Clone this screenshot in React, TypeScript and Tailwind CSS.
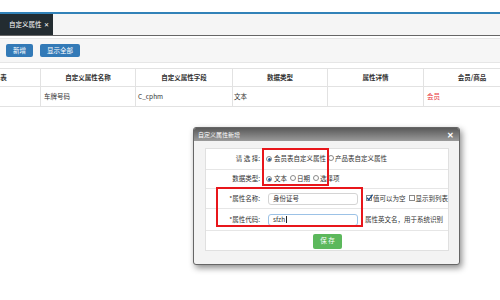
const font = "font-['Noto_Sans_CJK_SC','Noto_Sans',sans-serif]";

const columns = ["所属表", "自定义属性名称", "自定义属性字段", "数据类型", "属性详情", "会员/商品"];

function Radio({ checked }: { checked?: boolean }) {
  return (
    <span className="inline-flex h-[6px] w-[6px] items-center justify-center rounded-full border border-[#8a8a8a] bg-white">
      {checked && <span className="h-[3px] w-[3px] rounded-full bg-[#1f5f9a]" />}
    </span>
  );
}

function Check({ checked }: { checked?: boolean }) {
  return (
    <span className="relative inline-block h-[6px] w-[6px] border border-[#8a8a8a] bg-white">
      {checked && (
        <svg viewBox="0 0 6 6" className="absolute -left-px -top-[2px] h-[7px] w-[7px]">
          <path d="M1 3.2 L2.4 5 L5.6 0.6" stroke="#1a4f8a" strokeWidth="1.1" fill="none" />
        </svg>
      )}
    </span>
  );
}

function FormRow({ label, h, children }: { label: string; h: string; children?: React.ReactNode }) {
  return (
    <div className={`flex items-center border-b border-[#e6e6e6] ${h}`}>
      <div className="w-[56px] pr-[2px] text-right">{label}</div>
      <div className="flex items-center pl-[4px]">{children}</div>
    </div>
  );
}

export default function App() {
  return (
    <div className={`relative h-[300px] w-[500px] overflow-hidden bg-white ${font}`}>
      <div className="h-[12px]" />
      <div className="h-[2px] bg-[#3282b8]" />
      <div className="flex h-[22px] border-b border-[#666] bg-[#f5f5f5]">
        <div className="flex w-[53px] items-center gap-[2px] bg-[#232c31] pl-[9px] text-[6.5px] text-white">
          自定义属性 <span className="text-[6px]">✕</span>
        </div>
      </div>
      <div className="mt-[2px] flex h-[25px] items-center gap-[7px] border-y border-[#e6e6e6] bg-[#f6f6f6] pl-[6px]">
        <button className="h-[13px] w-[27px] rounded-[2px] bg-[#337ab7] text-[6.5px] text-white">新增</button>
        <button className="h-[13px] w-[40px] rounded-[2px] bg-[#337ab7] text-[6.5px] text-white">显示全部</button>
      </div>

      <div className="ml-[-46px] mt-[5px] w-[566px] text-[6.5px] text-[#333]">
        <div className="grid h-[19px] grid-cols-[86px_95px_97px_95px_96px_97px] border-y border-[#e2e2e2] font-bold">
          {columns.map((c, i) => (
            <div key={c} className={`flex items-center justify-center ${i > 0 ? "border-l border-[#e2e2e2]" : ""}`}>
              {c}
            </div>
          ))}
        </div>
        <div className="grid h-[20px] grid-cols-[86px_95px_97px_95px_96px_97px] border-b border-[#e2e2e2]">
          <div />
          <div className="flex items-center border-l border-[#e2e2e2] pl-[3px]">车牌号码</div>
          <div className="flex items-center border-l border-[#e2e2e2] pl-[2px]">C_cphm</div>
          <div className="flex items-center border-l border-[#e2e2e2] pl-[1px]">文本</div>
          <div className="border-l border-[#e2e2e2]" />
          <div className="flex items-center border-l border-[#e2e2e2] pl-[3px] text-[#e8383d]">会员</div>
        </div>
      </div>

      {/* dialog */}
      <div className="absolute left-[193px] top-[127px] h-[138px] w-[267px] rounded-[3px] border border-[#666] bg-[#f3f3f3] shadow-[2px_3px_6px_rgba(0,0,0,0.45)]">
        <div className="flex h-[13px] items-center justify-between rounded-t-[2px] bg-gradient-to-b from-[#5a5a5a] to-[#9b9b9b] pl-[4px] pr-[5px] text-[6px] text-white">
          <span>自定义属性新增</span>
          <span className="text-[8px] font-bold leading-none">✕</span>
        </div>
        <div className="mx-[11px] mt-[7px] h-[103px] w-[244px] border border-[#e0e0e0] bg-white text-[6.5px] text-[#333]">
          <FormRow label="请 选 择:" h="h-[21px]">
            <Radio checked />
            <span className="ml-[2px]">会员表自定义属性</span>
            <span className="ml-[2px]"><Radio /></span>
            <span className="ml-[1px]">产品表自定义属性</span>
          </FormRow>
          <FormRow label="数据类型:" h="h-[19px]">
            <Radio checked />
            <span className="ml-[2px]">文本</span>
            <span className="ml-[3px]"><Radio /></span>
            <span className="ml-[1px]">日期</span>
            <span className="ml-[3px]"><Radio /></span>
            <span className="ml-[1px]">选择项</span>
          </FormRow>
          <FormRow label="*属性名称:" h="h-[20px]">
            <div className="ml-[2px] flex h-[12px] w-[90px] items-center rounded-[3px] border border-[#d4d4d4] pl-[4px]">身份证号</div>
            <span className="ml-[8px]"><Check checked /></span>
            <span className="ml-[1px]">值可以为空</span>
            <span className="ml-[3px]"><Check /></span>
            <span className="ml-[1px]">显示到列表</span>
          </FormRow>
          <FormRow label="*属性代码:" h="h-[22px]">
            <div className="ml-[2px] flex h-[12px] w-[90px] items-center rounded-[3px] border border-[#9cc2e6] pl-[4px]">
              sfzh<span className="ml-[1px] h-[7px] w-px bg-[#222]" />
            </div>
            <span className="ml-[7px]">属性英文名，用于系统识别</span>
          </FormRow>
          <div className="flex h-[20px] items-center justify-center pl-[1px]">
            <button className="h-[15px] w-[29px] rounded-[2px] bg-[#5cb85c] text-[6.5px] text-white">保 存</button>
          </div>
        </div>
      </div>

      {/* annotation boxes */}
      <div className="absolute left-[262px] top-[148px] h-[38px] w-[67px] border-2 border-[#e8161b]" />
      <div className="absolute left-[216px] top-[187px] h-[40px] w-[147px] border-2 border-[#e8161b]" />
    </div>
  );
}
